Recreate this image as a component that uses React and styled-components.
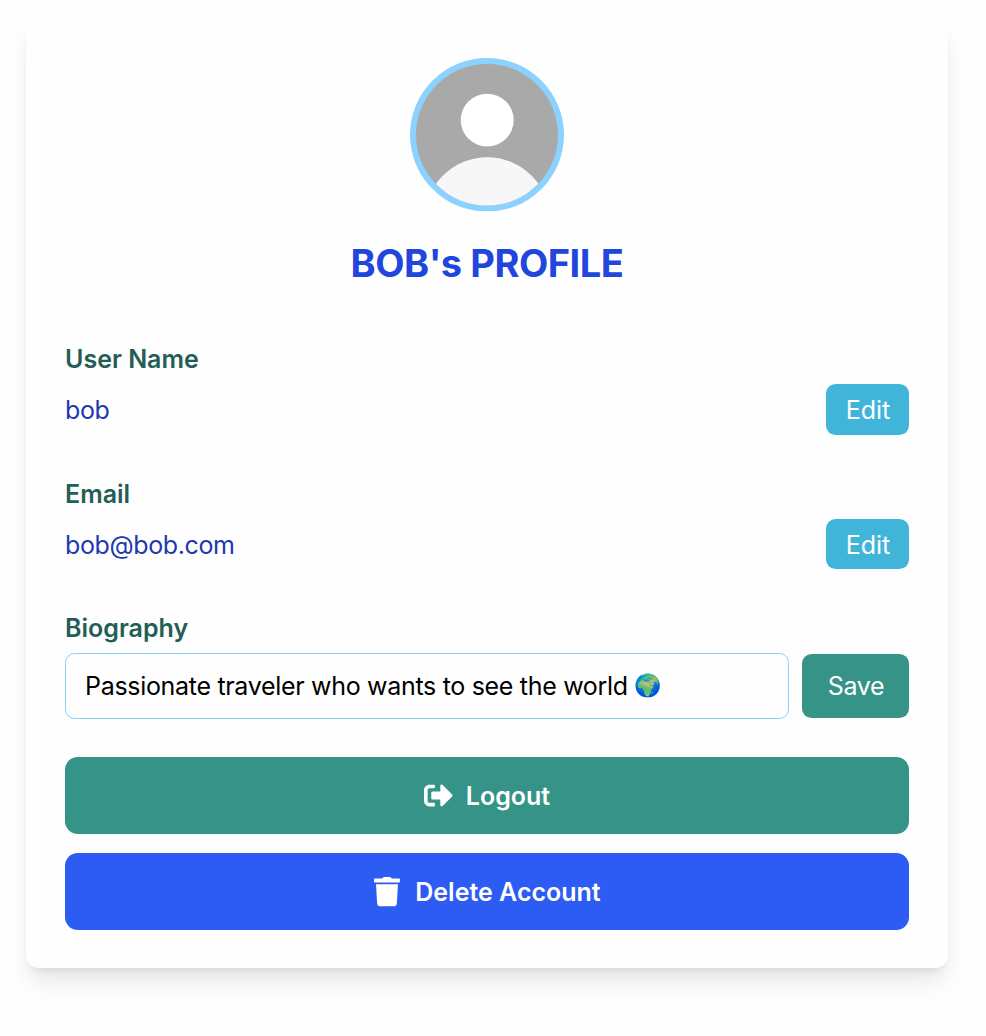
import React from "react";
import styled, { createGlobalStyle } from "styled-components";
import { FaSignOutAlt } from "react-icons/fa";

const GlobalStyle = createGlobalStyle`
  *, *::before, *::after { box-sizing: border-box; }
  body {
    margin: 0;
    background: #fefefe;
    font-family: Inter, "Liberation Sans", sans-serif;
    font-size: 25px;
    line-height: 38.4px;
  }
  button { font: inherit; }
`;

const Page = styled.main`
  min-height: 1036px;
  padding: 19.2px 38px 68px 26px;
`;

const Card = styled.section`
  display: flex;
  flex-direction: column;
  padding: 38.4px 39px;
  border-radius: 12.8px;
  background: #fefefe;
  box-shadow: 0 16px 24px -4.8px rgba(0, 0, 0, 0.1),
    0 6.4px 9.6px -6.4px rgba(0, 0, 0, 0.1);
`;

const Avatar = styled.svg`
  display: block;
  align-self: center;
  width: 154px;
  height: 153.6px;
`;

const Title = styled.h1`
  margin: 26.6px 0 50.2px;
  color: #2146dc;
  font-size: 38px;
  font-weight: 700;
  line-height: 51.2px;
  letter-spacing: -0.45px;
  text-align: center;
`;

const Field = styled.div`
  display: flex;
  flex-direction: column;
  gap: 5.4px;
  margin-bottom: 38.4px;
`;

const Label = styled.label`
  padding-top: 1px;
  color: #235e56;
  font-weight: 600;
`;

const Row = styled.div`
  display: flex;
  align-items: center;
  justify-content: space-between;
  gap: 13px;
  min-height: 51.2px;
`;

const Value = styled.span`
  padding-top: 2px;
  color: #2038b0;
  letter-spacing: -0.38px;
`;

const EditButton = styled.button`
  width: 83px;
  height: 50.8px;
  padding: 2px 0 0 1px;
  border: 0;
  border-radius: 9.6px;
  background: #40b5d9;
  color: #fff;
`;

const BioInput = styled.div`
  flex: 1;
  min-width: 0;
  height: 66px;
  padding: 13px 19px;
  border: 1px solid #8bd1fb;
  border-radius: 9.6px;
  outline: 0;
  color: #000;
  letter-spacing: -0.31px;
  white-space: nowrap;
`;

const Emoji = styled.span`
  display: inline-block;
  margin-left: -0.5px;
  font-size: 22px;
  letter-spacing: 0;
  line-height: 1;
  vertical-align: 2px;
  filter: saturate(1.2) brightness(0.85);
`;

const SaveButton = styled(EditButton)`
  width: 107px;
  height: 64px;
  padding-top: 0;
  background: #359388;
  letter-spacing: -0.3px;
`;

const Actions = styled.div`
  display: flex;
  flex-direction: column;
  gap: 19.2px;
`;

const ActionButton = styled.button`
  display: flex;
  align-items: center;
  justify-content: center;
  gap: ${(p) => p.$gap};
  height: 76.8px;
  padding: 0;
  border: 0;
  border-radius: 12.8px;
  background: ${(p) => p.$color};
  color: #fff;
  font-weight: 600;
`;

const ActionText = styled.span`
  padding-top: 2px;
`;

const TrashIcon = styled.svg`
  width: 26px;
  height: 30px;
  margin: 2px 0 0 1px;
`;

export default function App() {
  return (
    <>
      <GlobalStyle />
      <Page>
        <Card>
          <Avatar viewBox="0 0 154 154" preserveAspectRatio="none">
            <defs>
              <clipPath id="avatar-clip"><circle cx="77" cy="77" r="71" /></clipPath>
            </defs>
            <circle cx="77" cy="77" r="77" fill="#8bd2ff" />
            <g clipPath="url(#avatar-clip)">
              <rect width="154" height="154" fill="#a9a9a9" />
              <circle cx="77.2" cy="62.3" r="26.5" fill="#fff" />
              <circle cx="77.2" cy="162" r="62.5" fill="#f7f7f7" />
            </g>
          </Avatar>
          <Title>BOB's PROFILE</Title>
          <Field>
            <Label>User Name</Label>
            <Row><Value>bob</Value><EditButton>Edit</EditButton></Row>
          </Field>
          <Field>
            <Label>Email</Label>
            <Row><Value>bob@bob.com</Value><EditButton>Edit</EditButton></Row>
          </Field>
          <Field>
            <Label>Biography</Label>
            <Row>
              <BioInput role="textbox" contentEditable suppressContentEditableWarning>
                Passionate traveler who wants to see the world <Emoji>🌍</Emoji>
              </BioInput>
              <SaveButton>Save</SaveButton>
            </Row>
          </Field>
          <Actions>
            <ActionButton $color="#359388" $gap="13px">
              <FaSignOutAlt size={29} />
              <ActionText>Logout</ActionText>
            </ActionButton>
            <ActionButton $color="#2c5cf3" $gap="15px">
              <TrashIcon viewBox="0 0 26 30" fill="currentColor">
                <path d="M1 1.6h7L9.2.4Q9.5 0 10 0h6q.5 0 .8.4L18 1.6h7q1 0 1 1v1.8q0 1-1 1H1q-1 0-1-1V2.6q0-1 1-1Z" />
                <path d="M2 7.2h22l-1.2 19.9q-.2 2.1-2.3 2.1h-15q-2.1 0-2.3-2.1Z" />
              </TrashIcon>
              <ActionText>Delete Account</ActionText>
            </ActionButton>
          </Actions>
        </Card>
      </Page>
    </>
  );
}
